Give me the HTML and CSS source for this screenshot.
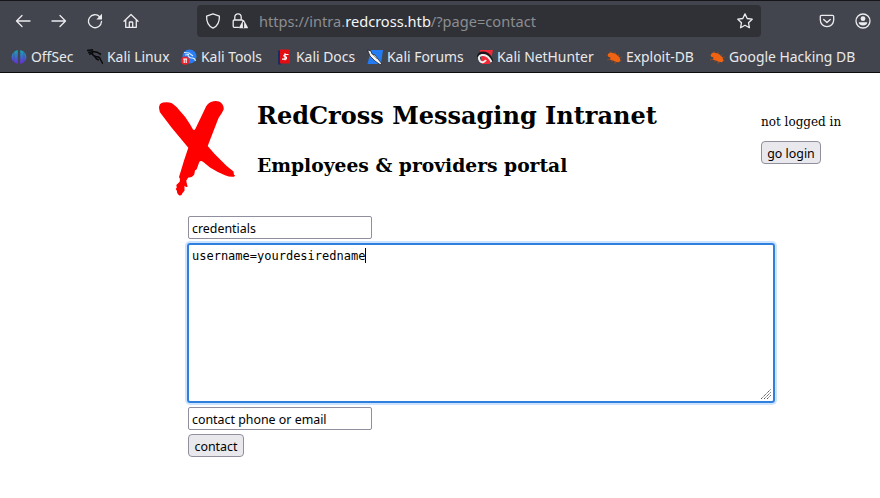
FILE: index.html
```html
<!DOCTYPE html>
<html lang="en">
<head>
<meta charset="utf-8">
<title>RedCross Messaging Intranet</title>
<link rel="stylesheet" href="styles.css">
</head>
<body>
<header class="chrome">
  <nav class="toolbar">
    <div class="nav-buttons">
      <svg class="icon" viewBox="0 0 16 16"><path d="M15 8H1.500M7 2.500 1.500 8 7 13.500"/></svg>
      <svg class="icon" viewBox="0 0 16 16"><path d="M1 8h13.500M9 2.500 14.500 8 9 13.500"/></svg>
      <svg class="icon" viewBox="0 0 16 16"><path d="M12.700 3.700A6.500 6.500 0 1 0 14.500 8.500"/><path class="solid" d="M15 .8v5.700H9.300z"/></svg>
      <svg class="icon" viewBox="0 0 16 16"><path d="M1 8.300 8 1.500l7 6.800M2.700 7v7.300h10.600V7M6.300 14V9.700q0-.7.7-.7h2q.7 0 .7.700V14"/></svg>
    </div>
    <div class="address">
      <svg class="icon" viewBox="0 0 16 16"><path d="M8 .9 14.400 3.200C14.600 8.500 12.600 13 8 15.200 3.400 13 1.400 8.500 1.600 3.200Z"/></svg>
      <svg class="icon lock" viewBox="0 0 16 16"><path d="M6.500 14.300H2.200q-1 0-1-1V8q0-1 1-1h7.600q1 0 1 .8M2.800 7V4a3.200 3.200 0 0 1 6.400 0v3"/><path class="solid" d="M11 7.300q.5-.8 1 0l3.800 7q.3 1-.6 1H7.800q-.9 0-.6-1z"/><path class="mark" d="M11.500 9.700v2.700M11.500 13.200v1.100"/></svg>
      <span class="url">https://intra.<b>redcross.htb</b>/?page=contact</span>
      <svg class="icon star" viewBox="0 0 16 16"><path d="m8 .9 2.200 4.600 5 .7-3.700 3.500.9 5L8 12.300l-4.400 2.400.9-5L.8 6.200l5-.7z"/></svg>
    </div>
    <div class="account">
      <svg class="icon" viewBox="0 0 16 16"><path d="M2.500 2.300h11q1.200 0 1.200 1.200V7a6.700 6.700 0 0 1-13.400 0V3.500q0-1.200 1.200-1.200ZM4.700 6.500 8 9.500l3.300-3"/></svg>
      <svg class="icon" viewBox="0 0 16 16"><circle cx="8" cy="8" r="7"/><circle class="solid" cx="8" cy="5.700" r="2.400"/><path class="solid" d="M3.700 9.200h8.600q0 3-4.300 3.400-4.300-.4-4.300-3.400"/></svg>
    </div>
  </nav>
  <nav class="bookmarks">
    <a class="bm offsec"><svg viewBox="0 0 16 16"><defs><linearGradient id="og" gradientUnits="userSpaceOnUse" x1="0" y1="1" x2="0" y2="15"><stop stop-color="#12a9b4"/><stop offset="1" stop-color="#6a29dc"/></linearGradient></defs><path fill="url(#og)" d="M2.800 3v10Q.5 11 .5 8t2.300-5M3.200 2.400 6.800 1v14l-3.600-1.400zM9.200 1l3.600 1.400v11.200L9.200 15zM13.200 3q2.300 2 2.300 5t-2.300 5z"/></svg><span>OffSec</span></a>
    <a class="bm linux"><svg viewBox="0 0 16 16"><path class="dragon" d="M0 1.500 6 .8M1 3.500l6-1M2 5.200l4-1M5.500 1.500q-1 5.500 3.500 6 4 0 4.700 3.500L16 15M6 2.500l4 .7 4 2.300M8 7.500q1 3 4 3.500"/></svg><span>Kali Linux</span></a>
    <a class="bm tools"><svg viewBox="0 0 16 16"><circle cx="8.500" cy="7.500" r="7" fill="#287df4"/><path d="m3 3.500 5 .5 4 3M4 6l4-.5M7 5q0 4 4 4 3 0 3.500 3" fill="none" stroke="#d6eaff" stroke-width="1.100"/><circle cx="4.200" cy="11.700" r="4.100" fill="#e8212b"/><path d="M2.200 10h4M3.200 10v4M5.200 10v4" fill="none" stroke="#fff" stroke-width="1.100"/></svg><span>Kali Tools</span></a>
    <a class="bm docs"><svg viewBox="0 0 16 16"><path fill="#172c63" d="M2 1.500h3v14H2z"/><path fill="#e40d12" d="M4 .5h10v14H4z"/><path d="M12.500 5.500H9Q6.500 7 9 7.500t1 2.700H6M9 4.200v7" fill="none" stroke="#fff" stroke-width="1.200"/></svg><span>Kali Docs</span></a>
    <a class="bm forums"><svg viewBox="0 0 16 16"><path fill="#237bf4" d="M4 1h12l-2 14H.5z"/><path d="M.5 1 4 2l1 3 3 1 3 4 4 5-2 .5-5-3.500-5-5z" fill="#f4f4f4" stroke="#20242a" stroke-width=".8"/><path d="m5 5 5 5" stroke="#777" stroke-width=".7"/></svg><span>Kali Forums</span></a>
    <a class="bm hunter"><svg viewBox="0 0 16 16"><path fill="#ef2938" d="M3 1h13l-3 14H5z"/><path d="M1 8Q2 3 8 4q6 2 7 9" fill="none" stroke="#17171b" stroke-width="2.500"/><path d="M9 11q-3 4-6 1-3-5 2-6 6-1 9.500 7" fill="none" stroke="#eee" stroke-width="2"/></svg><span>Kali NetHunter</span></a>
    <a class="bm exploit"><svg viewBox="0 0 16 16"><path d="m.5 6 15 6M5 2l1 11M9 3v12M13 5l-3 9M1 11l15-3" stroke="#a44b20" stroke-width=".7"/><path d="m2 5 2-1.500 3 .5 3 1 3.500 3.500 1 3-1.500 1.700-3-.5-2.500-1L4 10.500l.5-2L2 7.500z" fill="#f26311"/></svg><span>Exploit-DB</span></a>
    <a class="bm google"><svg viewBox="0 0 16 16"><path d="m.5 6 15 6M5 2l1 11M9 3v12M13 5l-3 9M1 11l15-3" stroke="#a44b20" stroke-width=".7"/><path d="m2 5 2-1.500 3 .5 3 1 3.500 3.500 1 3-1.500 1.700-3-.5-2.500-1L4 10.500l.5-2L2 7.500z" fill="#f26311"/></svg><span>Google Hacking DB</span></a>
  </nav>
</header>
<main>
  <section class="banner">
    <svg class="logo" viewBox="0 0 78 96"><path fill="red" d="M1 7Q1 2.500 5 1.600 10 .5 14 2.300 18 5 22 10 28 16 32 23.300L34.700 28Q36 30 37.300 28L47 7.700Q49 2.500 53 1 57-.5 61 .5 66 3 65.700 8.500L63.700 12.300Q60 17 58.700 21.700L49.700 45Q57 54 63.700 60 68 65 75.500 70.500L76 74 77.300 74.300 76 75.700Q72 76.300 67 74.300 59 71 52 66.500L45 60.800Q42.700 59.300 41.300 61L38.700 68.300 37 69.500 36.300 73.300Q34 77 30.300 76.500L28.300 79.500 28.700 82 29.700 85.700 28 86 26.500 84.700 26.500 89.700 24.500 92Q23.500 95.500 21 94.300 18.500 92.500 19 90L17.700 88 18.800 86.500 18.300 84 21.700 80.700 22 78 21 76 22.700 70.500Q26 59 30.300 46.700L13.700 26.700 4 14Q1 11 1 7"/></svg>
    <div class="titles"><h1>RedCross Messaging Intranet</h1><h3>Employees &amp; providers portal</h3></div>
    <div class="session"><p>not logged in</p><button>go login</button></div>
  </section>
  <form class="contact-form">
    <div class="field"><span>credentials</span></div>
    <div class="message"><span>username=yourdesiredname</span><i class="caret"></i><svg class="grip" viewBox="0 0 10 10"><path d="M0 10 10 0M3 10l7-7M6 10l4-4" stroke="#555" stroke-dasharray="1.400 .6"/></svg></div>
    <div class="field phone"><span>contact phone or email</span></div>
    <button type="button">contact</button>
  </form>
</main>
</body>
</html>
```
FILE: styles.css
```css
* { box-sizing: border-box; }
body { margin: 0; width: 880px; height: 498px; overflow: hidden; background: #fff; color: #000; font-family: "DejaVu Serif", serif; }
.chrome { height: 73px; border-top: 1px solid #15151a; border-bottom: 1px solid #0c0c0d; background: #42454d; color: #e9e9eb; font-family: "Noto Sans", sans-serif; }
.toolbar { height: 40px; padding-top: 4px; display: flex; }
.icon { width: 16px; height: 16px; flex: none; fill: none; stroke: #ececef; stroke-width: 1.3; stroke-linecap: round; stroke-linejoin: round; }
.icon .solid { fill: #ececef; stroke: none; }
.icon .mark { stroke: #303136; }
.nav-buttons { width: 197px; padding-left: 15px; display: flex; align-items: center; gap: 20px; height: 32px; }
.address { width: 564px; height: 32px; border-radius: 4px; background: #303136; display: flex; align-items: center; padding: 0 8px; }
.lock { margin-left: 11px; }
.url { margin-left: 11px; font-size: 14.6px; color: #8c8d91; white-space: nowrap; line-height: 32px; }
.url b { font-weight: 400; color: #f5f5f6; }
.star { margin-left: auto; }
.account { display: flex; align-items: center; gap: 20px; height: 32px; margin-left: 58px; }
.bookmarks { height: 31px; padding-left: 11px; display: flex; align-items: center; font-size: 13.9px; white-space: nowrap; }
.bm { display: flex; align-items: center; gap: 4px; height: 28px; flex: none; }
.bm svg { width: 16px; height: 16px; flex: none; }
.dragon { fill: none; stroke: #090a0c; stroke-width: 1.5; }
.offsec { width: 76px; }
.linux { width: 94px; }
.tools { width: 95px; }
.docs { width: 91px; }
.forums { width: 110px; }
.hunter { width: 129px; }
.exploit { width: 103px; }
.banner { height: 143px; padding: 28px 0 0 158px; display: flex; align-items: flex-start; }
.logo { width: 78px; height: 96px; flex: none; }
.titles { width: 525px; padding-left: 21px; flex: none; }
h1 { margin: 1px 0 0; font-size: 24px; line-height: 28px; white-space: nowrap; }
h3 { margin: 24px 0 0; font-size: 18.72px; line-height: 22px; white-space: nowrap; }
.session { padding-top: 14px; }
.session p { margin: 0 0 11px; font-size: 12px; line-height: 15px; white-space: nowrap; }
button { display: block; height: 23px; padding: 2px 0 0; border: 1px solid #8f8f9d; border-radius: 4px; background: #e9e9ed; color: #000; font: 12.4px/20px "Noto Sans", sans-serif; }
.session button { width: 60px; }
.contact-form { margin-left: 188px; }
.field { width: 184px; height: 23px; border: 1px solid #8f8f9d; border-radius: 2px; padding: 1px 3px 0; font: 12.4px/21px "Noto Sans", sans-serif; }
.message { position: relative; display: flex; width: 588px; height: 160px; margin: 4px 0 4px -1px; border: 2px solid #2f7fdc; border-radius: 3px; box-shadow: 0 0 0 2px #cce4ff; padding: 2px 3px; font: 12px/18px "DejaVu Sans Mono", monospace; }
.caret { width: 1px; height: 15px; margin-top: 1px; background: #000; }
.grip { position: absolute; right: 2px; bottom: 2px; width: 10px; height: 10px; }
.contact-form button { width: 56px; margin-top: 4px; }
```
